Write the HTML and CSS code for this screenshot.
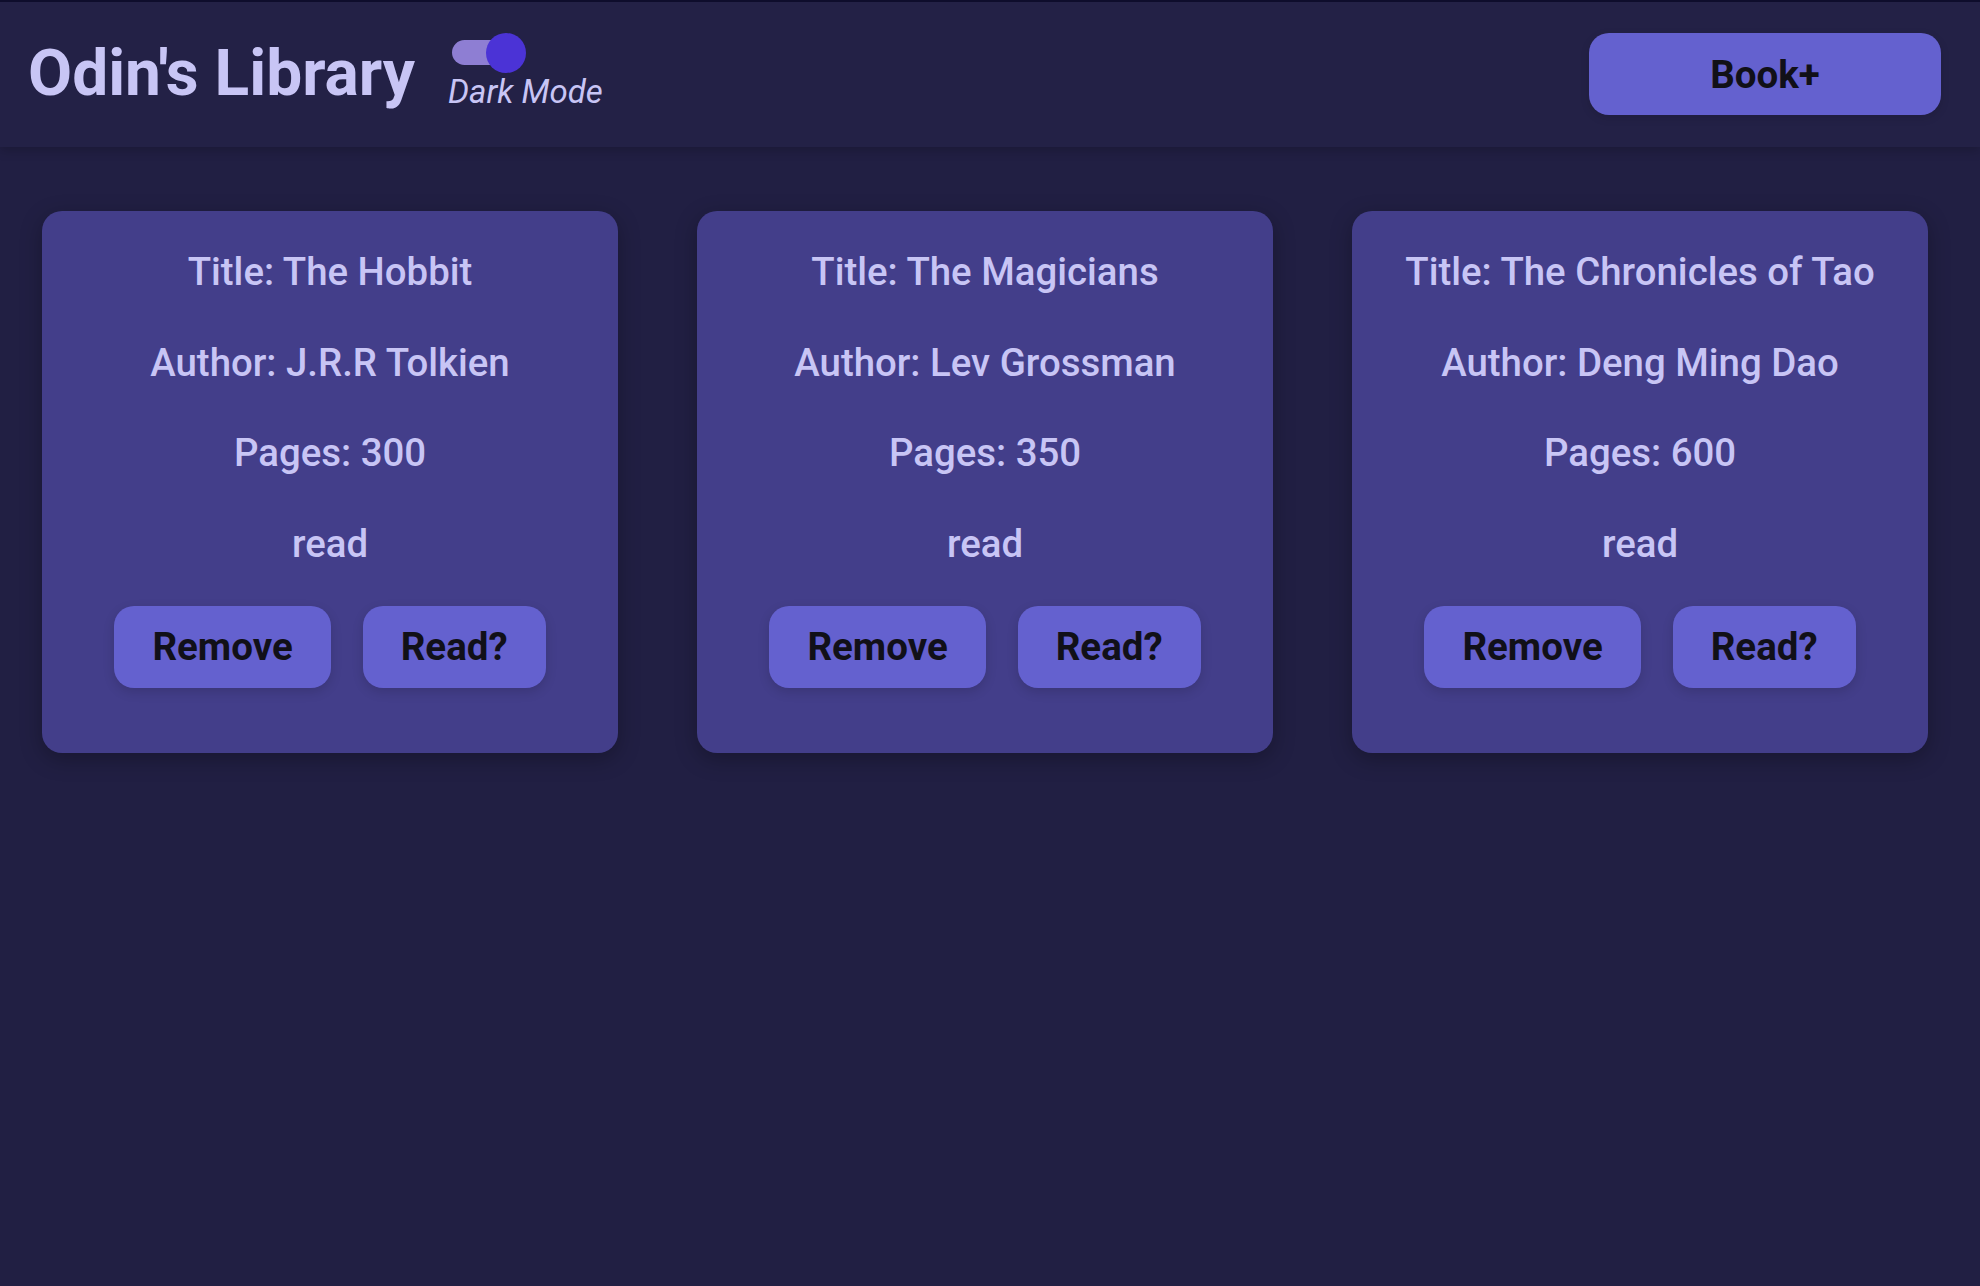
FILE: index.html
```html
<!DOCTYPE html>
<html lang="en">
<head>
<meta charset="utf-8">
<title>Odin's Library</title>
<link rel="stylesheet" href="styles.css">
</head>
<body>
<header class="topbar">
  <div class="brand">
    <h1 class="logo">Odin's Library</h1>
    <div class="mode">
      <span class="toggle"><span class="knob"></span></span>
      <span class="mode-label">Dark Mode</span>
    </div>
  </div>
  <button class="btn btn-add">Book+</button>
</header>
<main class="library">
  <article class="card">
    <div class="info">
      <p>Title: The Hobbit</p>
      <p>Author: J.R.R Tolkien</p>
      <p>Pages: 300</p>
      <p>read</p>
    </div>
    <div class="actions">
      <button class="btn btn-card">Remove</button>
      <button class="btn btn-card">Read?</button>
    </div>
  </article>
  <article class="card">
    <div class="info">
      <p>Title: The Magicians</p>
      <p>Author: Lev Grossman</p>
      <p>Pages: 350</p>
      <p>read</p>
    </div>
    <div class="actions">
      <button class="btn btn-card">Remove</button>
      <button class="btn btn-card">Read?</button>
    </div>
  </article>
  <article class="card">
    <div class="info">
      <p>Title: The Chronicles of Tao</p>
      <p>Author: Deng Ming Dao</p>
      <p>Pages: 600</p>
      <p>read</p>
    </div>
    <div class="actions">
      <button class="btn btn-card">Remove</button>
      <button class="btn btn-card">Read?</button>
    </div>
  </article>
</main>
</body>
</html>
```
FILE: styles.css
```css
* { box-sizing: border-box; }
html, body { margin: 0; padding: 0; }
body {
  background: #211f43;
  font-family: Roboto, "Liberation Sans", sans-serif;
  color: #c8c5f5;
  min-height: 1286px;
  border-top: 2px solid #0e0d2c;
}
.topbar {
  height: 145px;
  background: #232146;
  display: flex;
  align-items: center;
  justify-content: space-between;
  padding: 0 39px 1px 28px;
  box-shadow: 0 4px 10px rgba(0, 0, 0, 0.18);
  position: relative;
}
.brand {
  display: flex;
  align-items: center;
  gap: 33px;
}
.logo {
  margin: 0;
  font-size: 64px;
  font-weight: 700;
  color: #c8c5f5;
  line-height: 1.172;
}
.mode {
  display: flex;
  flex-direction: column;
  align-items: flex-start;
  gap: 0;
  padding-bottom: 3px;
}
.toggle {
  display: block;
  width: 74px;
  height: 40px;
  margin-left: 4px;
  position: relative;
}
.toggle::before {
  content: "";
  position: absolute;
  left: 0;
  top: 7px;
  width: 60px;
  height: 25px;
  border-radius: 12.5px;
  background: #8e7ed3;
}
.knob {
  position: absolute;
  left: 34px;
  top: 0;
  width: 40px;
  height: 40px;
  border-radius: 50%;
  background: #4b33d6;
}
.mode-label {
  font-size: 33px;
  font-style: italic;
  color: #c8c5f5;
  line-height: 1.172;
}
.btn {
  font-family: Roboto, "Liberation Sans", sans-serif;
  font-weight: 700;
  font-size: 38.5px;
  color: #111018;
  background: #6461cf;
  border: none;
  border-radius: 20px;
  cursor: pointer;
}
.btn-add {
  width: 352px;
  height: 82px;
  box-shadow: 0 3px 10px rgba(0, 0, 0, 0.12);
}
.library {
  display: grid;
  grid-template-columns: repeat(3, 576px);
  gap: 79px;
  padding: 64px 42px;
}
.card {
  background: #433e8a;
  border-radius: 20px;
  height: 542px;
  padding: 38px 0 0;
  display: flex;
  flex-direction: column;
  align-items: center;
  box-shadow: 0 6px 22px rgba(0, 0, 0, 0.28);
}
.info {
  display: flex;
  flex-direction: column;
  align-items: center;
  gap: 45.6px;
}
.info p {
  margin: 0;
  font-size: 38.4px;
  font-weight: 500;
  line-height: 45px;
  color: #c8c5f5;
}
.actions {
  margin-top: 40px;
  display: flex;
  gap: 32px;
}
.btn-card {
  height: 82px;
  padding: 0 38px;
  box-shadow: 0 4px 12px rgba(0, 0, 0, 0.14);
}
```
